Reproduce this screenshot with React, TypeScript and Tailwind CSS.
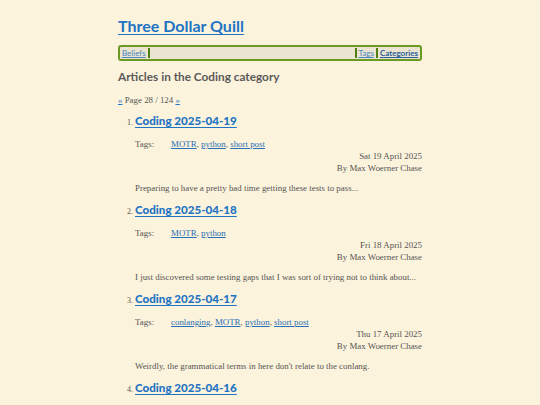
import React from 'react';

interface Post {
  title: string;
  tags: string[];
  date: string;
  summary: string;
}

const posts: Post[] = [
  {
    title: 'Coding 2025-04-19',
    tags: ['MOTR', 'python', 'short post'],
    date: 'Sat 19 April 2025',
    summary: 'Preparing to have a pretty bad time getting these tests to pass...',
  },
  {
    title: 'Coding 2025-04-18',
    tags: ['MOTR', 'python'],
    date: 'Fri 18 April 2025',
    summary: 'I just discovered some testing gaps that I was sort of trying not to think about...',
  },
  {
    title: 'Coding 2025-04-17',
    tags: ['conlanging', 'MOTR', 'python', 'short post'],
    date: 'Thu 17 April 2025',
    summary: "Weirdly, the grammatical terms in here don't relate to the conlang.",
  },
  {
    title: 'Coding 2025-04-16',
    tags: ['MOTR', 'python'],
    date: 'Wed 16 April 2025',
    summary: 'More tests.',
  },
];

const heading = { fontFamily: 'Lato, "Open Sans", sans-serif' };
const body = { fontFamily: '"Liberation Serif", "DejaVu Serif", serif' };

export default function App() {
  return (
    <div className="h-[405px] w-[540px] overflow-hidden bg-[#fcf3dc]">
      <div className="mx-auto w-[304px] pt-[13px]">
        <h1 style={heading} className="text-[16px] font-bold leading-[26px]">
          <a href="#" className="text-[#1f74c4] underline underline-offset-2">Three Dollar Quill</a>
        </h1>

        {/* nav */}
        <nav
          style={heading}
          className="mt-[6px] flex h-[16px] items-center rounded-[3px] border-2 border-[#6b9a22] bg-[#ebe4d0] px-[2px] text-[8px] leading-none"
        >
          <a href="#" className="text-[#4a86c0] underline">Beliefs</a>
          <span className="ml-[2px] h-[10px] w-[2px] bg-[#4f7f12]" />
          <span className="flex-1" />
          <span className="h-[10px] w-[2px] bg-[#4f7f12]" />
          <a href="#" className="ml-[2px] text-[#4a86c0] underline">Tags</a>
          <span className="mx-[2px] h-[10px] w-[2px] bg-[#4f7f12]" />
          <a href="#" className="font-bold text-[#2a5f99] underline">Categories</a>
        </nav>

        <h2 style={heading} className="mt-[7px] text-[11.8px] font-bold leading-[18px] text-[#5a5a5a]">
          Articles in the Coding category
        </h2>

        <p style={body} className="mt-[9px] text-[8.9px] leading-[10px] text-[#555]">
          <a href="#" className="text-[#1f74c4] underline">«</a> Page 28 / 124{' '}
          <a href="#" className="text-[#1f74c4] underline">»</a>
        </p>

        <ol className="mt-[5px] pl-[17px]">
          {posts.map((post, i) => (
            <li key={post.title} className="h-[89px]">
              <div className="flex items-baseline">
                <span style={body} className="-ml-[8px] w-[8px] text-[8px] text-[#555]">{i + 1}.</span>
                <a
                  href="#"
                  style={heading}
                  className="text-[11.6px] font-black leading-[22px] text-[#1f74c4] underline underline-offset-2"
                >
                  {post.title}
                </a>
              </div>
              <div style={body} className="mt-[6px] flex text-[8.9px] leading-[12px] text-[#555]">
                <span className="w-[36px]">Tags:</span>
                <span>
                  {post.tags.map((t, j) => (
                    <React.Fragment key={t}>
                      <a href="#" className="text-[#2a6fb5] underline">{t}</a>
                      {j < post.tags.length - 1 ? ', ' : ''}
                    </React.Fragment>
                  ))}
                </span>
              </div>
              <div style={body} className="text-right text-[8.9px] leading-[12px] text-[#555]">
                <div>{post.date}</div>
                <div>By Max Woerner Chase</div>
              </div>
              <p style={body} className="mt-[8px] text-[8.9px] leading-[12px] text-[#555]">{post.summary}</p>
            </li>
          ))}
        </ol>
      </div>
    </div>
  );
}
